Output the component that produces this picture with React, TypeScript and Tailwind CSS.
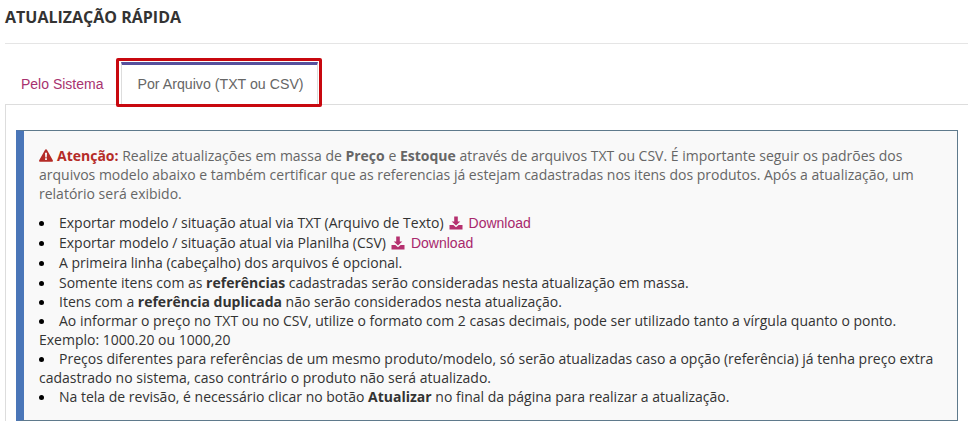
function DownloadIcon() {
  return (
    <svg viewBox="0 0 14 14" className="inline-block w-[14px] h-[14px] align-[-2px] mr-[6px]" fill="#b5306f">
      <path d="M5.2 0.5h3.6v5h2.5L7 9.6 2.7 5.5h2.5z" />
      <path d="M0.5 9h3.9L7 11.3 9.6 9h3.9v4.5h-13z" />
    </svg>
  );
}

function AlertIcon() {
  return (
    <svg viewBox="0 0 14 13" className="inline-block w-[14px] h-[13px] align-[-1px] mr-[4px]">
      <path d="M7 0.3c.4 0 .7.2.9.5l5.9 10.4c.4.7-.1 1.5-.9 1.5H1.1c-.8 0-1.3-.8-.9-1.5L6.1.8c.2-.3.5-.5.9-.5z" fill="#b52b27" />
      <path d="M6 3.8h2l-.25 4.6h-1.5z" fill="#f9f9f9" />
      <rect x="6.1" y="9.2" width="1.8" height="1.8" fill="#f9f9f9" />
    </svg>
  );
}

function Dl() {
  return (
    <a className="text-[#a8286c] ml-[5px] font-['Liberation_Sans',sans-serif]">
      <DownloadIcon />
      Download
    </a>
  );
}

function Bullet() {
  return <span className="inline-block w-[5px] h-[5px] rounded-full bg-black mr-[15px] align-[2px]" />;
}

export default function App() {
  return (
    <div className="w-[968px] h-[426px] overflow-hidden bg-white font-['Open_Sans',sans-serif]">
      <div className="h-[44px] ml-[5px] border-b border-[#e5e5e5] pt-[6px]">
        <h1 className="text-[16px] leading-[22px] font-bold text-[#333]">ATUALIZAÇÃO RÁPIDA</h1>
      </div>
      <div className="ml-[5px] mt-[18px]">
        <div className="flex h-[43px] border-b border-[#ddd] font-['Liberation_Sans',sans-serif] text-[14px]">
          <a className="pl-[16px] pr-[18px] pt-[12px] text-[#a8326f]">Pelo Sistema</a>
          <div className="relative h-[43px] w-[197px] pl-[15px] pt-[9px] bg-white border-x border-[#ddd] border-t-[3px] border-t-[#56509c] text-[#666] text-[14.2px]">
            Por Arquivo (TXT ou CSV)
            <div className="absolute -left-[6px] -top-[7px] w-[206px] h-[49px] border-[3px] border-[#c8080f] rounded-[2px]" />
          </div>
        </div>
        <div className="border-l border-[#ddd] pl-[10px] pt-[25px] pr-[10px]">
          <div className="h-[291px] border border-[#5f7a8c] border-l-[8px] border-l-[#4a76b8] bg-[#f9f9f9] text-[14px] leading-[19.1px] text-[#666] pl-[15px] pr-[16px] pt-[15px]">
            <p>
              <AlertIcon />
              <b className="text-[#b52b27] font-bold">Atenção:</b> Realize atualizações em massa de <b>Preço</b> e <b>Estoque</b> através de arquivos TXT ou CSV. É importante seguir os padrões dos arquivos modelo abaixo e também certificar que as referencias já estejam cadastradas nos itens dos produtos. Após a atualização, um relatório será exibido.
            </p>
            <ul className="mt-[10px] text-[#333]">
              <li><Bullet />Exportar modelo / situação atual via TXT (Arquivo de Texto)<Dl /></li>
              <li><Bullet />Exportar modelo / situação atual via Planilha (CSV)<Dl /></li>
              <li><Bullet />A primeira linha (cabeçalho) dos arquivos é opcional.</li>
              <li><Bullet />Somente itens com as <b>referências</b> cadastradas serão consideradas nesta atualização em massa.</li>
              <li><Bullet />Itens com a <b>referência duplicada</b> não serão considerados nesta atualização.</li>
              <li><Bullet />Ao informar o preço no TXT ou no CSV, utilize o formato com 2 casas decimais, pode ser utilizado tanto a vírgula quanto o ponto.<br />Exemplo: 1000.20 ou 1000,20</li>
              <li><Bullet />Preços diferentes para referências de um mesmo produto/modelo, só serão atualizadas caso a opção (referência) já tenha preço extra cadastrado no sistema, caso contrário o produto não será atualizado.</li>
              <li><Bullet />Na tela de revisão, é necessário clicar no botão <b>Atualizar</b> no final da página para realizar a atualização.</li>
            </ul>
          </div>
        </div>
      </div>
    </div>
  );
}
